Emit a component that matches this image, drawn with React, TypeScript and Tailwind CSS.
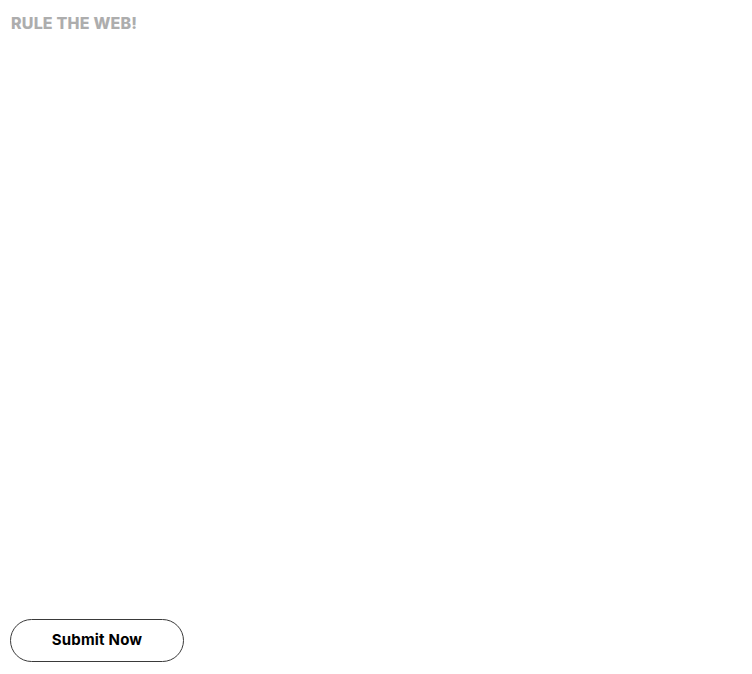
import React from "react";

const App = () => {
  return (
    <div className="flex h-[674px] flex-col justify-between bg-white px-[10px] pb-[12px] pt-[12px] font-['Inter',sans-serif]">
      <h1 className="pl-px text-[16px] font-extrabold leading-[22px] tracking-[0.2px] text-[#adadad]">
        RULE THE WEB!
      </h1>
      <button className="h-[43px] w-[174px] rounded-full border border-[#3a3a3a] bg-white text-[15px] font-bold tracking-[0.2px] text-black">
        Submit Now
      </button>
    </div>
  );
};

export default App;
